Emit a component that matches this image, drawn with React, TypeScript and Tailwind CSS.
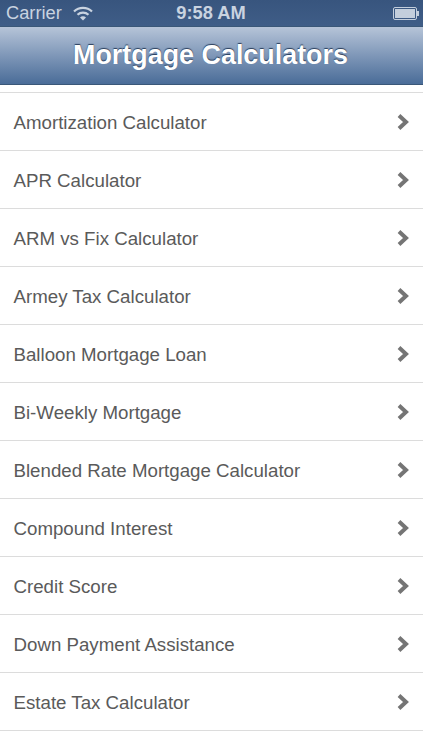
const ROWS = [
  "Amortization Calculator",
  "APR Calculator",
  "ARM vs Fix Calculator",
  "Armey Tax Calculator",
  "Balloon Mortgage Loan",
  "Bi-Weekly Mortgage",
  "Blended Rate Mortgage Calculator",
  "Compound Interest",
  "Credit Score",
  "Down Payment Assistance",
  "Estate Tax Calculator",
];

function WifiIcon() {
  return (
    <svg width="22" height="16" viewBox="0 0 22 16" className="ml-[10px]">
      <path d="M2 6.5a13 13 0 0 1 18 0" fill="none" stroke="#c9d3e0" strokeWidth="2.2" />
      <path d="M5.5 9.8a8 8 0 0 1 11 0" fill="none" stroke="#c9d3e0" strokeWidth="2.2" />
      <path d="M11 15.5l-3-3a4.2 4.2 0 0 1 6 0z" fill="#c9d3e0" />
    </svg>
  );
}

function BatteryIcon() {
  return (
    <div className="flex items-center">
      <div className="h-[13px] w-[24px] border border-[#c3cedc] rounded-[2px] p-[1px]">
        <div className="h-full w-[20px] bg-[#c3cedc]" />
      </div>
      <div className="h-[5px] w-[2px] bg-[#c3cedc]" />
    </div>
  );
}

function Chevron() {
  return (
    <svg width="14" height="18" viewBox="0 0 14 18">
      <path d="M3 2.5 L10 9 L3 15.5" fill="none" stroke="#757575" strokeWidth="4" />
    </svg>
  );
}

export default function App() {
  return (
    <div className="h-[750px] w-[423px] overflow-hidden bg-white font-['Liberation_Sans',sans-serif]">
      <div className="flex h-[26px] items-center justify-between bg-gradient-to-b from-[#38557e] to-[#3f5d87] pl-[6px] pr-[4px] text-[18.3px] leading-none text-[#c9d3e0]">
        <div className="flex w-[137px] items-center">
          <span>Carrier</span>
          <WifiIcon />
        </div>
        <span className="font-bold">9:58 AM</span>
        <div className="flex w-[140px] justify-end">
          <BatteryIcon />
        </div>
      </div>
      <div className="flex h-[59px] items-center justify-center border-y border-y-[#3a5778] bg-gradient-to-b from-[#b6c4d8] to-[#4a6c98] pr-[2px]">
        <h1 className="text-[26.9px] font-bold text-white [text-shadow:0_-1px_1px_rgba(30,50,80,0.9)]">
          Mortgage Calculators
        </h1>
      </div>
      <div className="mt-[7px] border-t border-t-[#dcdcdc]">
        {ROWS.map((row) => (
          <div
            key={row}
            className="flex h-[58px] items-center justify-between border-b border-b-[#dcdcdc] pl-[13.5px] pr-[13px] text-[18.7px] text-[#5a5a5a]"
          >
            <span className="pt-[4px]">{row}</span>
            <Chevron />
          </div>
        ))}
      </div>
    </div>
  );
}
